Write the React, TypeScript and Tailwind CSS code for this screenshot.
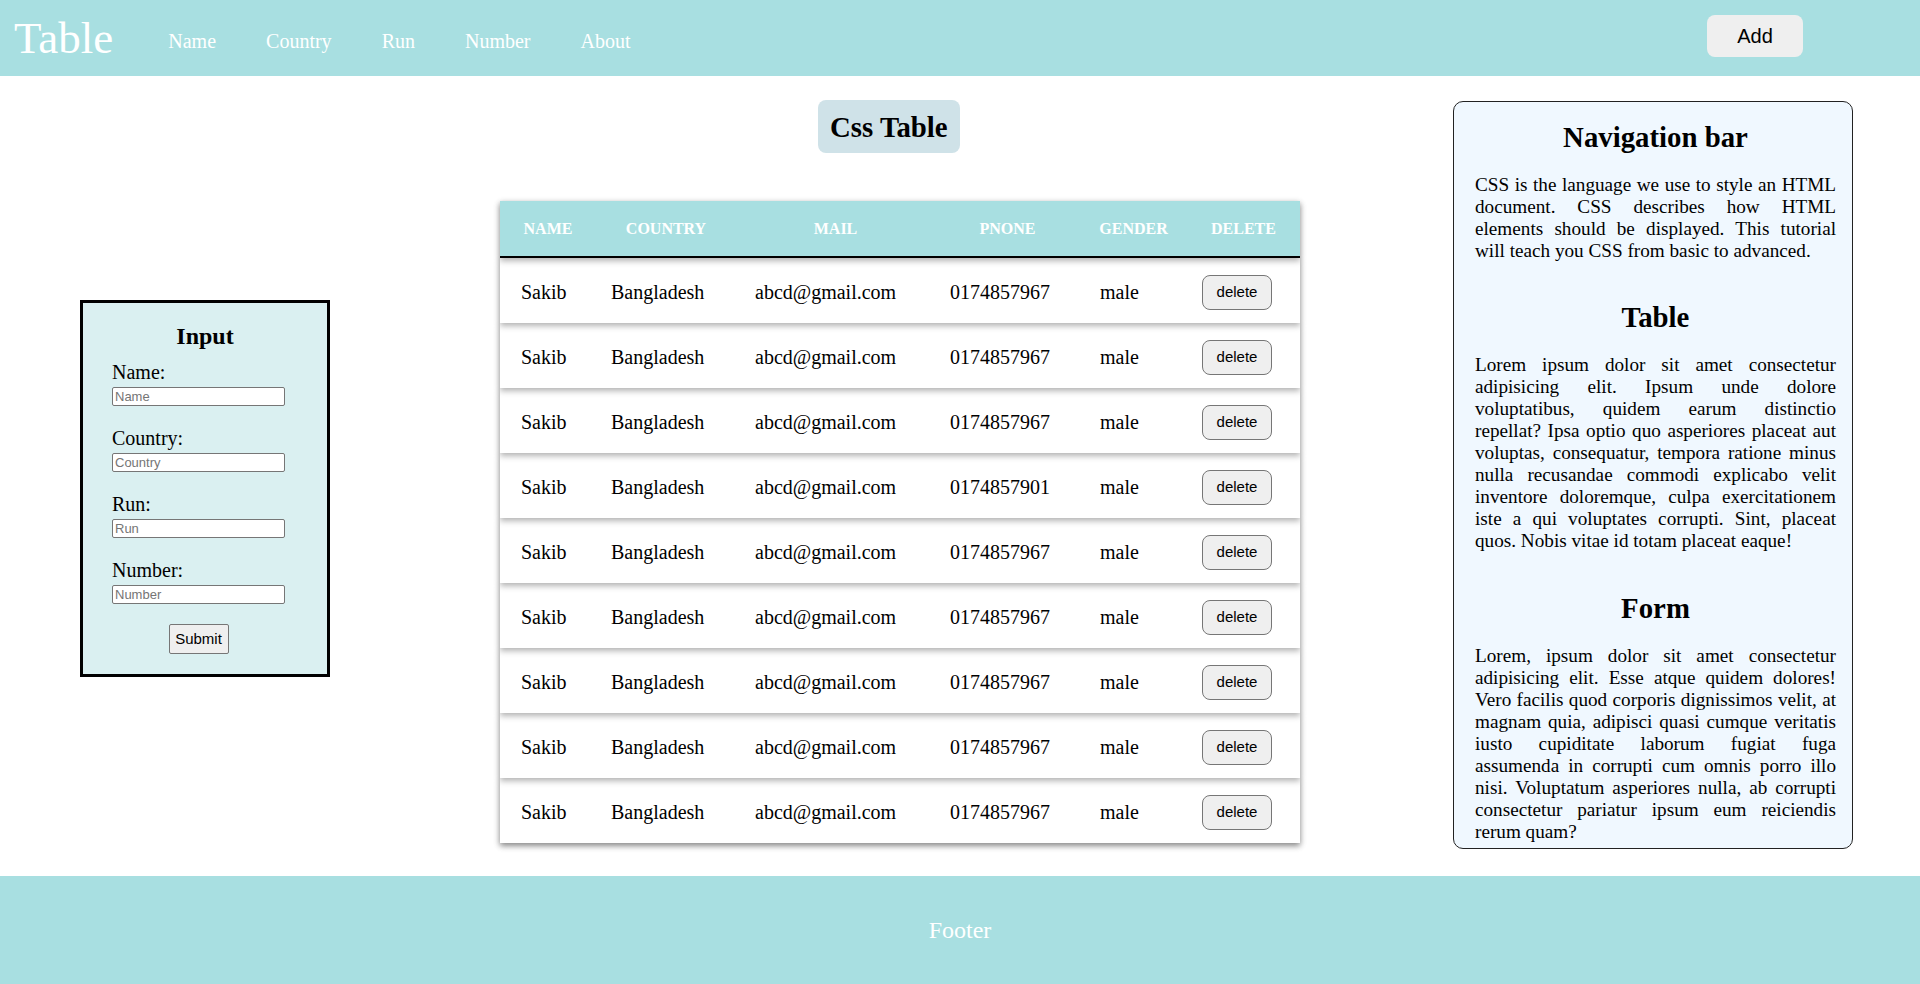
import React from "react";

const serif = "font-['Liberation_Serif','Times_New_Roman',serif]";
const sans = "font-['Liberation_Sans',Arial,sans-serif]";

const rows = [
  "0174857967",
  "0174857967",
  "0174857967",
  "0174857901",
  "0174857967",
  "0174857967",
  "0174857967",
  "0174857967",
  "0174857967",
];

function Header() {
  return (
    <header className="flex h-[76px] items-start bg-[#a8dfe1] text-white">
      <div className={`${serif} ml-[14px] mt-[13px] text-[45px] leading-[51px]`}>Table</div>
      <nav className={`${serif} ml-[55px] mt-[30px] flex gap-[50px] text-[20px] leading-[23px]`}>
        <a>Name</a>
        <a>Country</a>
        <a>Run</a>
        <a>Number</a>
        <a>About</a>
      </nav>
      <button className={`${sans} ml-auto mr-[117px] mt-[15px] h-[42px] w-[96px] rounded-[8px] bg-[#efefef] text-[20px] text-black`}>
        Add
      </button>
    </header>
  );
}

function InputBox() {
  const fields = ["Name", "Country", "Run", "Number"];
  return (
    <div className={`${serif} ml-[80px] mt-[224px] h-[377px] w-[250px] border-[3px] border-black bg-[#daf0f1] pt-[19px]`}>
      <h3 className="text-center text-[24px] font-bold leading-[28px]">Input</h3>
      <form className="ml-[29px] flex w-[173px] flex-col">
        {fields.map((f, i) => (
          <div key={f} className={i === 0 ? "mt-[11px]" : "mt-[21px]"}>
            <label className="block text-[20px] leading-[23px]">{f}:</label>
            <input
              placeholder={f}
              className={`${sans} mt-[3px] block h-[19px] w-[173px] rounded-[2px] border border-[#767676] bg-white px-[2px] text-[13px] placeholder:text-[#757575]`}
            />
          </div>
        ))}
        <button
          type="button"
          className={`${sans} mx-auto mt-[20px] h-[30px] w-[60px] rounded-[2px] border border-[#767676] bg-[#efefef] text-[15px]`}
        >
          Submit
        </button>
      </form>
    </div>
  );
}

function CssTable() {
  return (
    <div className={`${serif} ml-[170px] mt-[24px] w-[800px]`}>
      <h2 className="ml-[318px] w-fit rounded-[8px] bg-[#cfe2e8] px-[12px] pb-[9px] pt-[11px] text-[28.8px] font-bold leading-[33px]">
        Css Table
      </h2>
      <div className="mt-[48px] shadow-[0_2px_6px_rgba(0,0,0,0.25)]">
        <div className="relative z-30 grid h-[57px] grid-cols-[96px_140px_199px_145px_107px_113px] items-center border-b-2 border-black bg-[#a8dfe1] text-center text-[16px] font-bold text-white shadow-[0_3px_6px_rgba(0,0,0,0.3)]">
          <div>NAME</div>
          <div>COUNTRY</div>
          <div>MAIL</div>
          <div>PNONE</div>
          <div>GENDER</div>
          <div>DELETE</div>
        </div>
        {rows.map((phone, i) => (
          <div
            key={i}
            style={{ zIndex: 20 - i }}
            className="relative grid h-[65px] grid-cols-[90px_144px_195px_150px_102px_119px] items-center bg-white pt-[3px] text-[20px] shadow-[0_3px_6px_rgba(0,0,0,0.3)]"
          >
            <div className="pl-[21px]">Sakib</div>
            <div className="pl-[21px]">Bangladesh</div>
            <div className="pl-[21px]">abcd@gmail.com</div>
            <div className="pl-[21px]">{phone}</div>
            <div className="pl-[21px]">male</div>
            <div className="pl-[21px]">
              <button className={`${sans} h-[35px] w-[70px] rounded-[8px] border border-[#767676] bg-[#efefef] text-[15px]`}>
                delete
              </button>
            </div>
          </div>
        ))}
      </div>
    </div>
  );
}

function SidePanel() {
  return (
    <aside className={`${serif} ml-[153px] mt-[25px] h-[748px] w-[400px] rounded-[10px] border border-[#222] bg-[#f0f8ff] pl-[21px] pr-[16px] pt-[19px]`}>
      <h2 className="text-center text-[28.8px] font-bold leading-[33px]">Navigation bar</h2>
      <p className="mt-[20px] text-justify text-[19.2px] leading-[22px]">
        CSS is the language we use to style an HTML document. CSS describes how HTML elements should be displayed. This
        tutorial will teach you CSS from basic to advanced.
      </p>
      <h2 className="mt-[39px] text-center text-[28.8px] font-bold leading-[33px]">Table</h2>
      <p className="mt-[20px] text-justify text-[19.2px] leading-[22px]">
        Lorem ipsum dolor sit amet consectetur adipisicing elit. Ipsum unde dolore voluptatibus, quidem earum distinctio
        repellat? Ipsa optio quo asperiores placeat aut voluptas, consequatur, tempora ratione minus nulla recusandae
        commodi explicabo velit inventore doloremque, culpa exercitationem iste a qui voluptates corrupti. Sint, placeat
        quos. Nobis vitae id totam placeat eaque!
      </p>
      <h2 className="mt-[40px] text-center text-[28.8px] font-bold leading-[33px]">Form</h2>
      <p className="mt-[20px] text-justify text-[19.2px] leading-[22px]">
        Lorem, ipsum dolor sit amet consectetur adipisicing elit. Esse atque quidem dolores! Vero facilis quod corporis
        dignissimos velit, at magnam quia, adipisci quasi cumque veritatis iusto cupiditate laborum fugiat fuga assumenda
        in corrupti cum omnis porro illo nisi. Voluptatum asperiores nulla, ab corrupti consectetur pariatur ipsum eum
        reiciendis rerum quam?
      </p>
    </aside>
  );
}

export default function App() {
  return (
    <div className={`${serif} min-h-[984px] bg-white text-black`}>
      <Header />
      <main className="flex h-[800px] items-start">
        <InputBox />
        <CssTable />
        <SidePanel />
      </main>
      <footer className="flex h-[108px] items-center justify-center bg-[#a8dfe1] text-[24px] text-white">Footer</footer>
    </div>
  );
}
